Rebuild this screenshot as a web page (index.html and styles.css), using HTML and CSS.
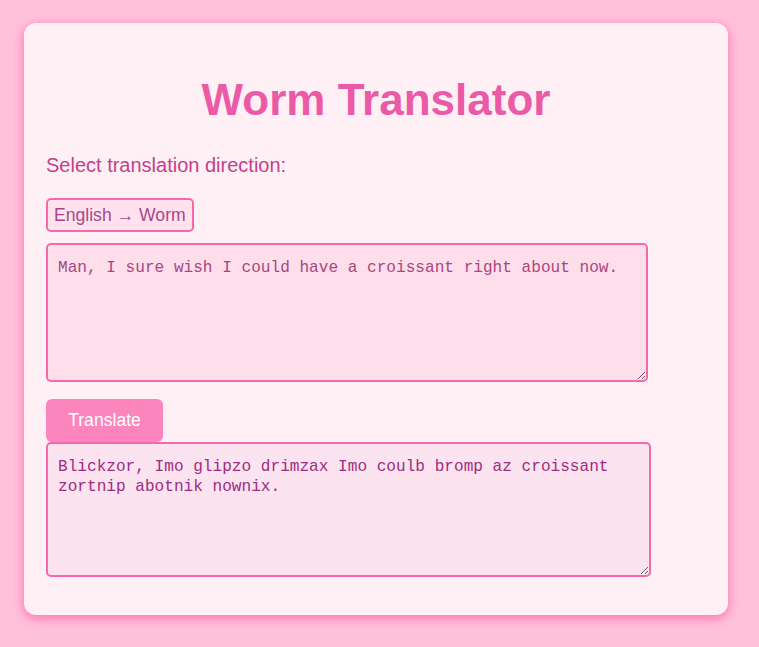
FILE: index.html
```html
<!DOCTYPE html>
<html lang="en">
<head>
<meta charset="utf-8">
<title>Worm Translator</title>
<link rel="stylesheet" href="styles.css">
</head>
<body>
<main class="card">
  <h1 class="title">Worm Translator</h1>
  <label class="label" for="direction">Select translation direction:</label>
  <select id="direction" class="direction">
    <option>English → Worm</option>
    <option>Worm → English</option>
  </select>
  <textarea class="box box-input">Man, I sure wish I could have a croissant right about now.</textarea>
  <button class="btn" type="button">Translate</button>
  <textarea class="box box-output" readonly>Blickzor, Imo glipzo drimzax Imo coulb bromp az croissant zortnip abotnik nownix.</textarea>
</main>
</body>
</html>
```

FILE: styles.css
```css
html, body {
  margin: 0;
  padding: 0;
}
body {
  background: #ffc1da;
  font-family: "Liberation Sans", Arial, sans-serif;
  min-height: 647px;
  padding: 23px 0 0 24px;
  box-sizing: border-box;
}
.card {
  width: 704px;
  height: 592px;
  box-sizing: border-box;
  background: #fff0f5;
  border-radius: 12px;
  box-shadow: 0 3px 11px rgba(255, 100, 170, 0.9);
  padding: 0 22px;
  display: flex;
  flex-direction: column;
  align-items: flex-start;
}
.title {
  align-self: stretch;
  text-align: center;
  margin: 51px 0 0;
  font-size: 44px;
  line-height: 51px;
  font-weight: bold;
  color: #eb5aa7;
}
.label {
  margin-top: 29px;
  font-size: 20px;
  line-height: 23px;
  color: #c53f8b;
}
.direction {
  -webkit-appearance: none;
  appearance: none;
  margin-top: 21px;
  height: 34px;
  box-sizing: border-box;
  padding: 0 6px;
  border: 2px solid #f26aa9;
  border-radius: 5px;
  background: #ffe2ee;
  color: #a8478c;
  font-family: "Liberation Sans", Arial, sans-serif;
  font-size: 17.6px;
}
.box {
  box-sizing: border-box;
  border: 2px solid #f26aa9;
  border-radius: 5px;
  padding: 13px 10px;
  font-family: "Liberation Mono", "DejaVu Sans Mono", monospace;
  font-size: 16.1px;
  line-height: 20px;
  margin: 0;
  outline: none;
}
.box-input {
  margin-top: 11px;
  width: 602px;
  height: 139px;
  background: #ffdeeb;
  color: #a8477f;
}
.box-output {
  width: 605px;
  height: 135px;
  background: #fbe3ef;
  color: #a02c82;
}
.btn {
  margin-top: 17px;
  width: 117px;
  height: 43px;
  border: none;
  border-radius: 6px;
  background: #fc85bd;
  color: #ffffff;
  font-family: "Liberation Sans", Arial, sans-serif;
  font-size: 17.6px;
  padding: 0;
}
```
